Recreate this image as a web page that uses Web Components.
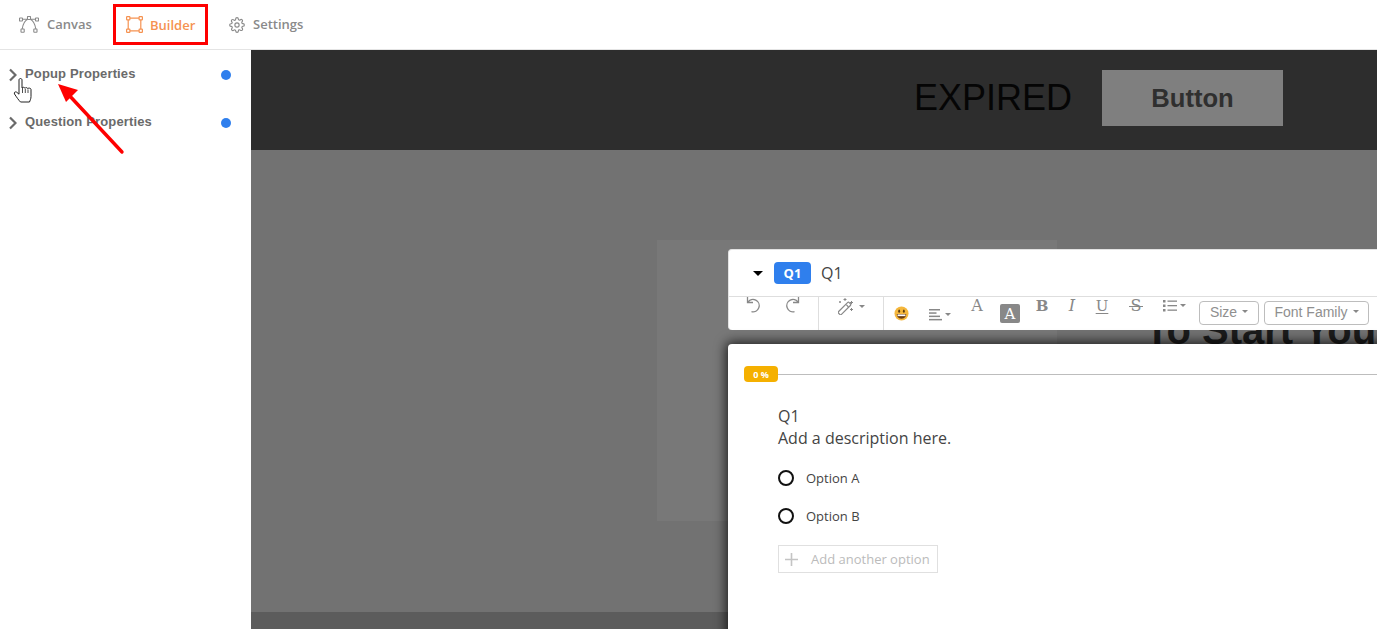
<!DOCTYPE html>
<html lang="en">

<head>
  <meta charset="UTF-8">
  <title>Builder</title>
  <style>
    html, body { margin: 0; height: 100%; overflow: hidden; background: #fff; }
  </style>
</head>

<body>
  <app-shell></app-shell>

  <template id="shellTemplate">
    <style>
      :host { display: flex; flex-direction: column; position: relative; width: 1377px; height: 629px; overflow: hidden; }
      .body { display: flex; flex: 1; min-height: 0; }
      .annot { position: absolute; left: 0; top: 0; pointer-events: none; }
    </style>
    <top-bar></top-bar>
    <div class="body">
      <side-bar></side-bar>
      <preview-stage></preview-stage>
    </div>
    <editor-toolbar></editor-toolbar>
    <question-card></question-card>
    <svg class="annot" width="140" height="160" viewBox="0 0 140 160">
      <path d="M122 152 L67 93" stroke="#fe0000" stroke-width="3.4" stroke-linecap="round" fill="none"/>
      <path d="M58 84 L78 90 L66 102 Z" fill="#fe0000"/>
      <path d="M19 80c0-2 3-2 3 0v8c.3-1 2.700-1 3 .3c.3-1 2.500-1 2.800 .4c.5-1 3.200-.7 3.200 .8v7c0 2.500-1 4-1.500 5.500h-9c-2-2-4-5-6-8c-.8-1.500 .8-2.800 2.200-1.800l2.300 2z" fill="#fff" stroke="#222" stroke-width="1"/>
      <path d="M22.500 88v5M25.300 89v4M28 89.500v3.500" stroke="#222" stroke-width=".8" fill="none"/>
    </svg>
  </template>

  <template id="topBarTemplate">
    <style>
      :host { display: flex; align-items: stretch; height: 49px; border-bottom: 1px solid #e4e4e4; background: #fff; font: 600 13px "Open Sans", sans-serif; color: #8a8a8a; }
      .tab { display: flex; align-items: center; gap: 8px; box-sizing: border-box; }
      .tab span { margin-top: -2px; }
      .canvas { width: 113px; padding-left: 19px; }
      .builder { width: 95px; height: 41px; margin-top: 4px; gap: 7px; border: 3px solid #fe0000; padding-left: 10px; color: #f59251; }
      .builder span { margin-top: 0; }
      .settings { padding-left: 21px; gap: 8px; }
      svg { display: block; flex: none; }
    </style>
    <div class="tab canvas">
      <svg width="20" height="17" viewBox="0 0 20 17" fill="none" stroke="#8a8a8a" stroke-width="1.100">
        <rect x="0.500" y="2" width="3" height="3" rx=".5"/><rect x="16.500" y="2" width="3" height="3" rx=".5"/><rect x="8.500" y="0.500" width="3" height="3" rx=".5"/>
        <rect x="2" y="13" width="3.200" height="3.200" rx=".5"/><rect x="14.800" y="13" width="3.200" height="3.200" rx=".5"/>
        <path d="M3.500 3.300 H8.500 M11.500 3.300 H16.500 M3.200 13 C4 8 6 4.500 8.700 3.300 M16.800 13 C16 8 14 4.500 11.300 3.300"/>
      </svg>
      <span>Canvas</span>
    </div>
    <div class="tab builder">
      <svg width="17" height="17" viewBox="0 0 17 17" fill="none" stroke="#f59251" stroke-width="1.200">
        <rect x="0.600" y="0.600" width="3.300" height="3.300" rx=".6"/><rect x="13.100" y="0.600" width="3.300" height="3.300" rx=".6"/>
        <rect x="0.600" y="13.100" width="3.300" height="3.300" rx=".6"/><rect x="13.100" y="13.100" width="3.300" height="3.300" rx=".6"/>
        <path d="M3.900 2.200 H13.100 M3.900 14.800 H13.100 M2.200 3.900 V13.100 M14.800 3.900 V13.100"/>
      </svg>
      <span>Builder</span>
    </div>
    <div class="tab settings">
      <svg width="16" height="16" viewBox="0 0 24 24" fill="none" stroke="#8a8a8a" stroke-width="1.700" stroke-linecap="round" stroke-linejoin="round">
        <circle cx="12" cy="12" r="3.200"/>
        <path d="M19.400 15a1.650 1.650 0 0 0 .33 1.820l.06.06a2 2 0 1 1-2.830 2.830l-.06-.06a1.650 1.650 0 0 0-2.820 1.170V21a2 2 0 1 1-4 0v-.09a1.650 1.650 0 0 0-2.800-1.170l-.06.06a2 2 0 1 1-2.830-2.830l.06-.06a1.650 1.650 0 0 0-1.170-2.800H3a2 2 0 1 1 0-4h.09a1.650 1.650 0 0 0 1.170-2.820l-.06-.06a2 2 0 1 1 2.830-2.830l.06.06a1.650 1.650 0 0 0 1.820.33H9a1.650 1.650 0 0 0 1-1.510V3a2 2 0 1 1 4 0v.09a1.650 1.650 0 0 0 2.820 1.170l.06-.06a2 2 0 1 1 2.830 2.830l-.06.06a1.650 1.650 0 0 0 1.170 2.820H21a2 2 0 1 1 0 4h-.09a1.650 1.650 0 0 0-1.510 1z"/>
      </svg>
      <span>Settings</span>
    </div>
  </template>

  <template id="sideBarTemplate">
    <style>
      :host { display: flex; flex-direction: column; flex: none; width: 251px; background: #fff; }
    </style>
    <prop-row>Popup Properties</prop-row>
    <prop-row>Question Properties</prop-row>
  </template>

  <template id="propRowTemplate">
    <style>
      :host { display: flex; align-items: center; box-sizing: border-box; height: 48px; padding: 0 20px 0 9px; font: bold 13px "Liberation Sans", Arial, sans-serif; letter-spacing: .14px; color: #6a6a6a; }
      svg { flex: none; margin-right: 8px; margin-top: 1px; }
      .label { flex: 1; margin-top: -2px; }
      .dot { width: 10px; height: 10px; border-radius: 50%; background: #2f7fed; margin-top: 2px; }
    </style>
    <svg width="8" height="14" viewBox="0 0 8 14" fill="none" stroke="#6a6a6a" stroke-width="2.200"><path d="M1 1.500 L6.500 7 L1 12.500"/></svg>
    <span class="label"><slot></slot></span>
    <span class="dot"></span>
  </template>

  <template id="stageTemplate">
    <style>
      :host { display: flex; flex-direction: column; flex: 1; min-width: 0; font-family: "Liberation Sans", Arial, sans-serif; }
      .band { display: flex; align-items: center; justify-content: flex-end; gap: 30px; flex: none; height: 100px; padding: 4px 94px 8px 0; box-sizing: border-box; background: #2d2d2d; }
      .expired { font-size: 36px; color: #050505; }
      .btn { display: flex; align-items: center; justify-content: center; width: 181px; height: 56px; background: #7f7f7f; color: #2f2f2f; font-size: 25.600px; font-weight: bold; }
      .main { flex: 1; background: #727272; padding: 90px 0 0 406px; }
      .panel { width: 400px; height: 281px; background: #787878; }
      .foot { flex: none; height: 17px; background: #5c5c5c; }
      /* only the strip between toolbar and card is visible */
      .behind { position: absolute; left: 1145px; top: 330px; width: 232px; height: 14px; overflow: hidden; font-size: 40px; font-weight: bold; line-height: 14px; color: #1b1b1b; white-space: nowrap; }
      .behind span { display: block; margin-top: -7px; }
    </style>
    <div class="band"><span class="expired">EXPIRED</span><span class="btn">Button</span></div>
    <div class="main"><div class="panel"></div></div>
    <div class="foot"></div>
    <div class="behind"><span>To Start You</span></div>
  </template>

  <template id="toolbarTemplate">
    <style>
      :host { display: block; position: absolute; left: 728px; top: 249px; width: 660px; height: 81px; box-sizing: border-box; background: #fff; border-radius: 4px; border: 1px solid #e3e3e3; border-right: 0; border-bottom: 0; font-family: "Liberation Sans", Arial, sans-serif; }
      .head { display: flex; align-items: center; height: 47px; box-sizing: border-box; border-bottom: 1px solid #dedede; padding-left: 24px; }
      .caret { width: 0; height: 0; border-left: 5px solid transparent; border-right: 5px solid transparent; border-top: 5px solid #000; margin-right: 11px; }
      .tag { display: flex; align-items: center; justify-content: center; width: 37px; height: 22px; border-radius: 4px; background: #2f7fed; color: #fff; font: bold 13px "Open Sans", sans-serif; margin-right: 10px; }
      .title { font: 16px "Open Sans", sans-serif; color: #444; }
      .tools { display: flex; height: 33px; color: #888; overflow: hidden; }
      .group { display: flex; height: 100%; border-right: 1px solid #dedede; box-sizing: border-box; flex: none; }
      .g1 { width: 90px; padding-left: 16px; gap: 24px; }
      .g2 { width: 65px; padding-left: 19px; gap: 5px; }
      .g3 { flex: 1; display: flex; padding-left: 10px; }
      svg { display: block; flex: none; }
      .mini { width: 0; height: 0; border-left: 3.500px solid transparent; border-right: 3.500px solid transparent; border-top: 3.500px solid #888; flex: none; }
      .glyph { position: relative; width: 20px; text-align: center; font: 16px/18px "DejaVu Serif", serif; color: #888; flex: none; }
      .emoji { width: 15px; height: 15px; margin-top: 9px; flex: none; }
      .align { display: flex; align-items: center; gap: 2px; margin: 11px 0 0 20px; height: 13px; flex: none; }
      .fontA { margin-left: 16px; }
      .boxA { display: flex; align-items: center; justify-content: center; width: 20px; height: 19px; border-radius: 2px; background: #888; color: #fff; margin: 7px 0 0 13px; font: 15px "DejaVu Serif", serif; flex: none; }
      .b { margin-left: 12px; font-size: 15px; font-weight: bold; }
      .i { margin-left: 10px; font-style: italic; }
      .u { margin-left: 10px; font-size: 15px; text-decoration: underline; text-underline-offset: 2px; }
      .s { margin-left: 14px; }
      .s::after { content: ""; position: absolute; left: 3px; right: 3px; top: 9px; height: 1px; background: #888; }
      .list { display: flex; align-items: center; gap: 3px; margin: 2px 0 0 17px; height: 13px; flex: none; }
      .pick { display: flex; align-items: center; justify-content: center; gap: 5px; box-sizing: border-box; height: 24px; margin-top: 4px; padding-bottom: 3px; border: 1px solid #bdbdbd; border-radius: 4px; font-size: 14px; color: #8f8f8f; flex: none; }
      .size { width: 60px; margin-left: 13px; }
      .family { width: 105px; margin-left: 5px; }
    </style>
    <div class="head"><span class="caret"></span><span class="tag">Q1</span><span class="title">Q1</span></div>
    <div class="tools">
      <div class="group g1">
        <svg width="16" height="16" viewBox="0 0 16 16" fill="none" stroke="#888" stroke-width="1.300"><path d="M2.500 0 V5.500 H8"/><path d="M2.800 5.300 A6.200 6.200 0 1 1 6.500 14.700"/></svg>
        <svg width="16" height="16" viewBox="0 0 16 16" fill="none" stroke="#888" stroke-width="1.300"><path d="M13.500 0 V5.500 H8"/><path d="M13.200 5.300 A6.200 6.200 0 1 0 9.500 14.700"/></svg>
      </div>
      <div class="group g2">
        <svg width="16" height="17" viewBox="0 0 16 17" fill="none" stroke="#888" stroke-width="1.200" style="margin-top:1px"><rect x="-1" y="8.500" width="15" height="4" rx="1.200" transform="rotate(-45 6.500 10.500)"/><path d="M8.300 6.700 L10.500 9" /><path d="M7 0 V3 M5.500 1.500 H8.500 M13.500 3 V6 M12 4.500 H15 M2 3 V5 M1 4 H3 M13.500 10 V13 M12 11.500 H15" stroke-width="1"/></svg>
        <span class="mini" style="margin-top:8px"></span>
      </div>
      <div class="g3">
        <svg class="emoji" viewBox="0 0 16 16"><circle cx="8" cy="8" r="7.500" fill="#f5b73c"/><ellipse cx="5.500" cy="5.500" rx="1" ry="1.700" fill="#5a3b10"/><ellipse cx="10.500" cy="5.500" rx="1" ry="1.700" fill="#5a3b10"/><path d="M3 8.500 H13 C13 12 10.500 13.500 8 13.500 C5.500 13.500 3 12 3 8.500Z" fill="#6b3c12"/><path d="M3.800 9 H12.200 V10.800 H3.800Z" fill="#fff"/></svg>
        <span class="align">
          <svg width="14" height="12" viewBox="0 0 14 12" fill="#888"><rect y="0" width="11" height="1.500"/><rect y="3.300" width="7.500" height="1.500"/><rect y="6.600" width="11" height="1.500"/><rect y="9.900" width="13" height="1.500"/></svg>
          <span class="mini"></span>
        </span>
        <span class="glyph fontA">A</span>
        <span class="boxA">A</span>
        <span class="glyph b">B</span>
        <span class="glyph i">I</span>
        <span class="glyph u">U</span>
        <span class="glyph s">S</span>
        <span class="list">
          <svg width="14" height="12" viewBox="0 0 14 12" fill="#888"><rect x="0" y="0" width="2.500" height="2.500"/><rect x="0" y="4.500" width="2.500" height="2.500"/><rect x="0" y="9" width="2.500" height="2.500"/><rect x="4.500" y=".5" width="9.500" height="1.300"/><rect x="4.500" y="5" width="9.500" height="1.300"/><rect x="4.500" y="9.500" width="9.500" height="1.300"/></svg>
          <span class="mini"></span>
        </span>
        <span class="pick size">Size <span class="mini"></span></span>
        <span class="pick family">Font Family <span class="mini"></span></span>
      </div>
    </div>
  </template>

  <template id="cardTemplate">
    <style>
      :host { display: block; position: absolute; left: 728px; top: 344px; width: 670px; height: 300px; background: #fff; border-radius: 4px 0 0 0; box-shadow: 0 0 12px 2px rgba(0, 0, 0, .75); font-family: "Open Sans", sans-serif; color: #444; }
      .progress { display: flex; align-items: center; height: 16px; margin: 22px 0 0 16px; }
      .badge { display: flex; align-items: center; justify-content: center; width: 34px; height: 16px; border-radius: 4px; background: #f5b000; color: #fff; font-size: 9px; font-weight: bold; flex: none; }
      .line { flex: 1; height: 1px; background: #bdbdbd; }
      .content { padding: 23px 0 0 50px; }
      .q { font-size: 16px; line-height: 22px; }
      .desc { font-size: 16px; line-height: 22px; margin-bottom: 10px; }
      .add { display: flex; align-items: center; box-sizing: border-box; width: 160px; height: 28px; margin-top: 10px; padding-left: 6px; border: 1px solid #e0e0e0; color: #bbb; font-size: 13px; }
      .add svg { margin-right: 13px; }
    </style>
    <div class="progress"><span class="badge">0 %</span><span class="line"></span></div>
    <div class="content">
      <div class="q">Q1</div>
      <div class="desc">Add a description here.</div>
      <option-radio>Option A</option-radio>
      <option-radio>Option B</option-radio>
      <div class="add"><svg width="13" height="13" viewBox="0 0 13 13" stroke="#c4c4c4" stroke-width="1.600"><path d="M6.500 0 V13 M0 6.500 H13"/></svg>Add another option</div>
    </div>
  </template>

  <template id="optionTemplate">
    <style>
      :host { display: flex; align-items: center; height: 38px; font: 13px "Open Sans", sans-serif; color: #444; }
      .radio { width: 16px; height: 16px; box-sizing: border-box; border: 2px solid #111; border-radius: 50%; margin-right: 12px; }
    </style>
    <span class="radio"></span><slot></slot>
  </template>

  <script type="module">
    const define = (name, templateId) => {
      customElements.define(name, class extends HTMLElement {
        constructor() {
          super();
          this.attachShadow({ mode: 'open' });
          const content = document.getElementById(templateId).content.cloneNode(true);
          this.shadowRoot.appendChild(content);
        }
      });
    };

    define('app-shell', 'shellTemplate');
    define('top-bar', 'topBarTemplate');
    define('side-bar', 'sideBarTemplate');
    define('prop-row', 'propRowTemplate');
    define('preview-stage', 'stageTemplate');
    define('editor-toolbar', 'toolbarTemplate');
    define('question-card', 'cardTemplate');
    define('option-radio', 'optionTemplate');
  </script>
</body>

</html>
